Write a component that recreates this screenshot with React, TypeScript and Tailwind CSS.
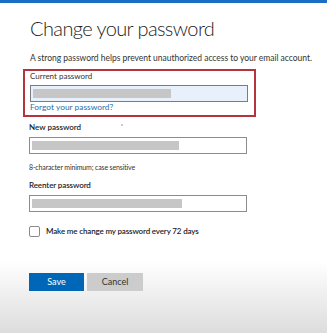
export default function App() {
  return (
    <div className="w-[327px] h-[333px] overflow-hidden bg-[linear-gradient(to_bottom,#ffffff_0px,#ffffff_262px,#dcdcdc_333px)] font-['Lato',sans-serif] text-[#333]">
      <div className="h-[3px] bg-[#1a6fc4]" />
      <h1 className="mt-[11px] ml-[30px] text-[20px] leading-[28px] tracking-[-0.6px] font-light text-[#222]">
        Change your password
      </h1>
      <p className="mt-[10px] ml-[30px] text-[8.5px] leading-[13px] tracking-[-0.02px] whitespace-nowrap text-[#333]">
        A strong password helps prevent unauthorized access to your email account.
      </p>
      <div className="mt-[4px] ml-[23px] w-[233px] h-[48px] border-2 border-[#b5323f] pl-[5px]">
        <div className="text-[8px] leading-[11px] text-[#333]">Current password</div>
        <div className="mt-[3px] w-[218px] h-[17px] border border-[#7b7b85] bg-[#e8f0fc] pl-[2px] pt-[3px]">
          <div className="w-[138px] h-[9px] bg-[#c6c6c6]" />
        </div>
        <div className="text-[8.4px] leading-[11px] text-[#2a6fa8]">Forgot your password?</div>
      </div>
      <div className="ml-[29px]">
        <div className="relative mt-[5px] text-[8px] leading-[11px] font-semibold text-[#222]">
          New password
          <span className="absolute left-[92px] top-[2px] w-[2px] h-[2px] rounded-full bg-[#bbb]" />
        </div>
        <div className="mt-[4px] w-[218px] h-[17px] border border-[#8c8c8c] bg-white pl-[2px] pt-[3px]">
          <div className="w-[147px] h-[9px] bg-[#c6c6c6]" />
        </div>
        <div className="mt-[8px] text-[7px] leading-[10px] tracking-[-0.15px] whitespace-nowrap text-[#333]">8-character minimum; case sensitive</div>
        <div className="mt-[8px] text-[8px] leading-[11px] tracking-[-0.1px] font-semibold text-[#222]">Reenter password</div>
        <div className="mt-[4px] w-[218px] h-[17px] border border-[#8c8c8c] bg-white pl-[2px] pt-[3px]">
          <div className="w-[150px] h-[9px] bg-[#c6c6c6]" />
        </div>
        <div className="mt-[14px] flex items-start gap-[6px]">
          <div className="w-[11px] h-[11px] rounded-[2px] border border-[#8a8a8a] bg-white" />
          <div className="mt-[0px] text-[8px] leading-[11px] tracking-[-0.15px] font-semibold whitespace-nowrap text-[#222]">
            Make me change my password every 72 days
          </div>
        </div>
        <div className="mt-[36px] flex gap-[3px]">
          <button className="w-[55px] h-[18px] bg-[#0067b8] text-white text-[9px] leading-[18px]">Save</button>
          <button className="w-[56px] h-[18px] bg-[#cccccc] text-[#333] text-[9px] leading-[18px]">Cancel</button>
        </div>
      </div>
    </div>
  );
}
